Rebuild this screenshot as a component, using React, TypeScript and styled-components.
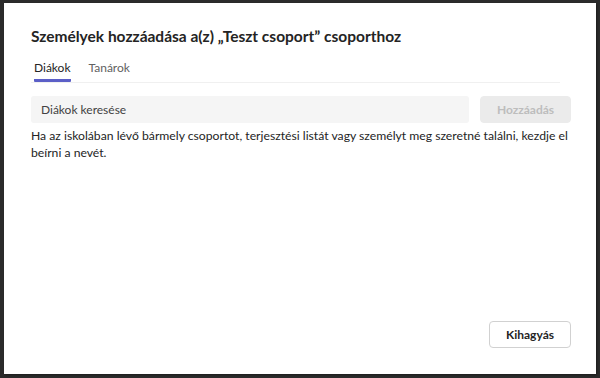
import { useState } from "react"
import styled, { createGlobalStyle } from "styled-components"

const GlobalStyle = createGlobalStyle`
	html, body {
		margin: 0;
		padding: 0;
		background: #2b2b2b;
		font-family: Lato, "Noto Sans", sans-serif;
	}
`

const Backdrop = styled.div`
	width: 600px;
	height: 378px;
	box-sizing: border-box;
	padding: 3px 4px 4px 4px;
	background: #2b2b2b;
`

// The white dialog surface
const Dialog = styled.div`
	height: 100%;
	box-sizing: border-box;
	background: #ffffff;
	box-shadow: 1px 1px 2px rgba(0, 0, 0, 0.35);
	padding: 21px 27px 26px 27px;
	display: flex;
	flex-direction: column;
	color: #242424;
`

const Title = styled.h1`
	margin: 0;
	font-size: 15.5px;
	font-weight: 700;
	line-height: 24px;
`

const TabBar = styled.div`
	display: flex;
	gap: 18px;
	margin-top: 11px;
	padding-left: 3px;
	margin-right: 9px;
	border-bottom: 1px solid #f0f0f0;
`

const Tab = styled.button<{ $active?: boolean }>`
	background: none;
	border: none;
	padding: 0 0 2px 0;
	font-family: inherit;
	font-size: 12px;
	line-height: 18px;
	color: ${(p) => (p.$active ? "#242424" : "#616161")};
	border-bottom: 3px solid ${(p) => (p.$active ? "#5b5fc7" : "transparent")};
	border-radius: 1px;
	cursor: pointer;
`

const SearchRow = styled.div`
	display: flex;
	gap: 11px;
	margin-top: 13px;
	margin-right: -2px;
`

const SearchInput = styled.input`
	flex: 1;
	height: 27px;
	box-sizing: border-box;
	border: none;
	border-radius: 3px;
	background: #f5f5f5;
	padding: 0 10px;
	font-family: inherit;
	font-size: 12px;
	color: #242424;
	outline: none;

	&::placeholder {
		color: #424242;
	}
`

const Button = styled.button<{ $disabled?: boolean }>`
	height: 27px;
	box-sizing: border-box;
	border-radius: 4px;
	font-family: inherit;
	font-size: 12px;
	font-weight: 700;
	padding: 0 12px;
	border: 1px solid ${(p) => (p.$disabled ? "#ebebeb" : "#d1d1d1")};
	background: ${(p) => (p.$disabled ? "#ebebeb" : "#ffffff")};
	color: ${(p) => (p.$disabled ? "#bdbdbd" : "#242424")};
	cursor: ${(p) => (p.$disabled ? "default" : "pointer")};
`

const AddButton = styled(Button)`
	width: 91px;
`

const SkipButton = styled(Button)`
	width: 82px;
`

const Hint = styled.p`
	margin: 4px 0 0 0;
	font-size: 12.2px;
	line-height: 17px;
	color: #242424;
`

const Footer = styled.div`
	margin-top: auto;
	display: flex;
	justify-content: flex-end;
	margin-right: -2px;
`

export default function App() {
	const [tab, setTab] = useState("students")
	const [query, setQuery] = useState("")

	return (
		<>
			<GlobalStyle />
			<Backdrop>
				<Dialog>
					<Title>Személyek hozzáadása a(z) „Teszt csoport” csoporthoz</Title>
					<TabBar>
						<Tab $active={tab === "students"} onClick={() => setTab("students")}>
							Diákok
						</Tab>
						<Tab $active={tab === "teachers"} onClick={() => setTab("teachers")}>
							Tanárok
						</Tab>
					</TabBar>
					<SearchRow>
						<SearchInput
							placeholder="Diákok keresése"
							value={query}
							onChange={(e) => setQuery(e.target.value)}
						/>
						<AddButton $disabled={query.length === 0}>Hozzáadás</AddButton>
					</SearchRow>
					<Hint>
						Ha az iskolában lévő bármely csoportot, terjesztési listát vagy személyt meg szeretné találni, kezdje el beírni a nevét.
					</Hint>
					<Footer>
						<SkipButton>Kihagyás</SkipButton>
					</Footer>
				</Dialog>
			</Backdrop>
		</>
	)
}
